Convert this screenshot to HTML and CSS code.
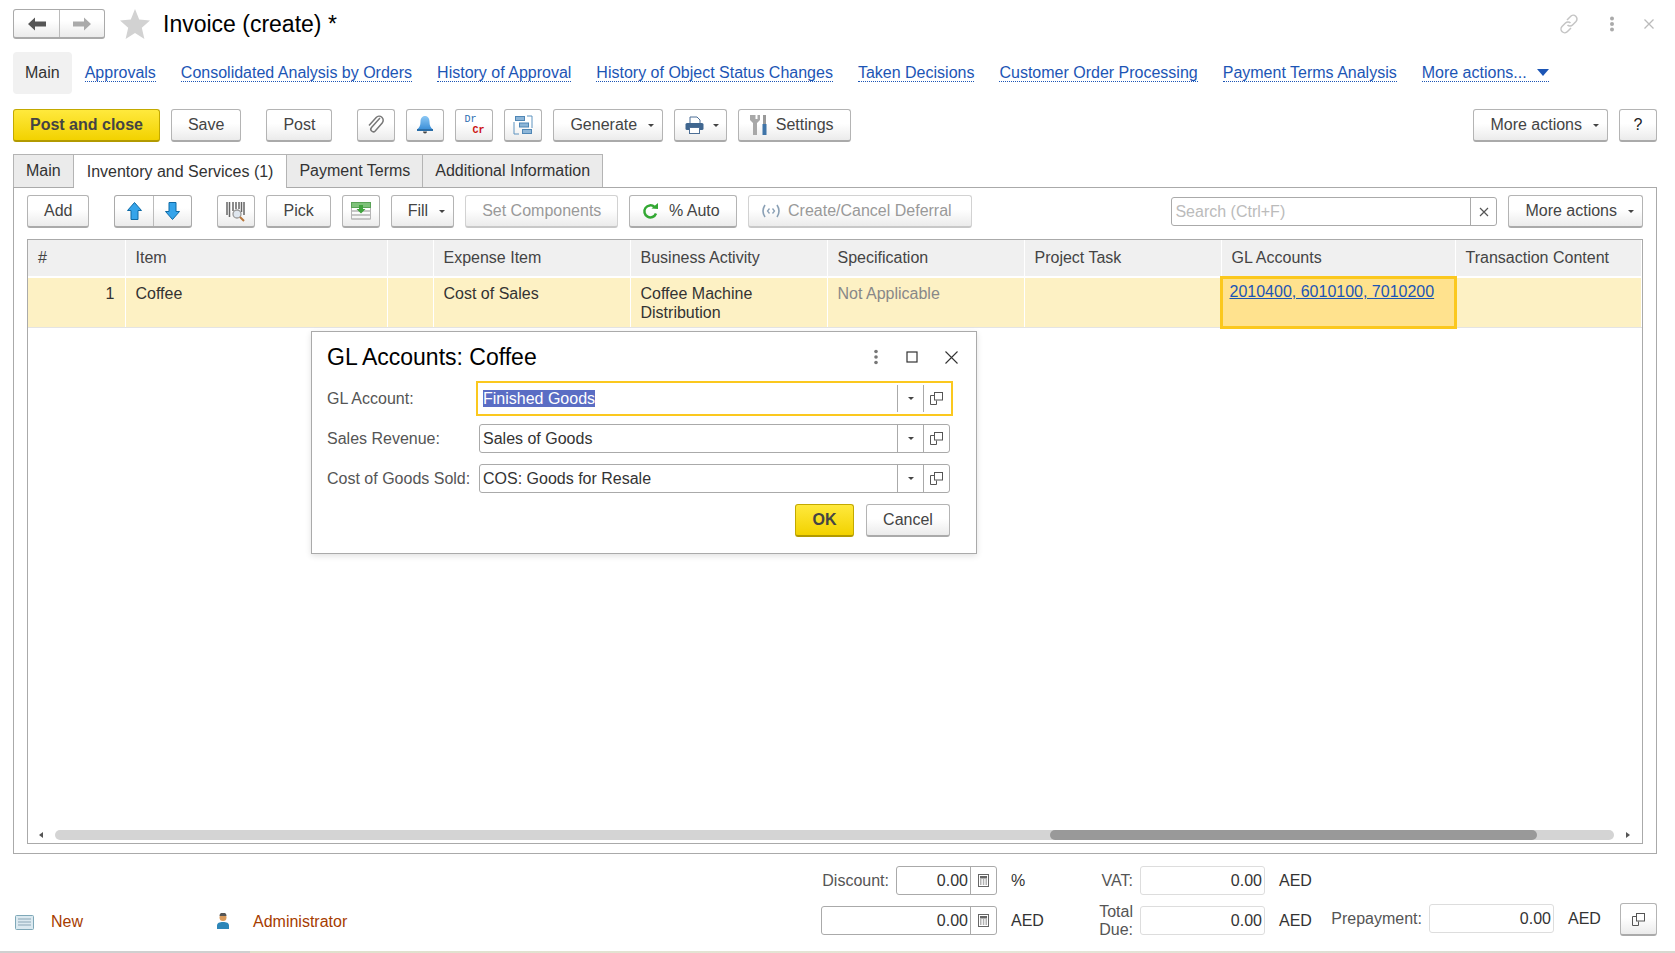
FILE: index.html
```html
<!DOCTYPE html>
<html>
<head>
    <meta charset="UTF-8">
    <title>Invoice (create)</title>
    <link rel="stylesheet" href="styles.css">
</head>
<body>
<div class="page">
    <div class="titlebar">
        <div class="btn-group hist">
            <span class="seg"><svg width="18" height="14" viewBox="0 0 18 14"><path d="M0 7l7-6.5v4h11v5H7v4z" fill="#555"/></svg></span>
            <span class="seg"><svg width="18" height="14" viewBox="0 0 18 14"><path d="M18 7l-7-6.5v4H0v5h11v4z" fill="#aaa"/></svg></span>
        </div>
        <svg class="star" width="30" height="30" viewBox="0 0 30 30"><path d="M15 0l4.2 10.6 10.8.9-8.2 7.2 2.6 11.3L15 24l-9.400 6 2.600-11.300L0 11.500l10.800-.9z" fill="#d2d2d2"/></svg>
        <h1 class="title">Invoice (create) *</h1>
        <div class="win-icons">
            <svg width="22" height="22" viewBox="0 0 22 22" fill="none" stroke="#c4c4c4" stroke-width="1.500"><path d="M9 7l3.500-3.500a3.500 3.500 0 0 1 5.500 5L14.500 12a3.500 3.500 0 0 1-5 0"/><path d="M13 15l-3.500 3.500a3.500 3.500 0 0 1-5.500-5L7.500 10a3.500 3.500 0 0 1 5 0"/></svg>
            <svg width="6" height="16" viewBox="0 0 6 16" fill="#aaa"><circle cx="3" cy="2.500" r="2"/><circle cx="3" cy="8" r="2"/><circle cx="3" cy="13.500" r="2"/></svg>
            <svg width="10" height="10" viewBox="0 0 10 10" stroke="#bbb" stroke-width="1.300"><path d="M.5.5l9 9M9.500.5l-9 9"/></svg>
        </div>
    </div>

    <div class="nav">
        <span class="nav-main">Main</span>
        <a class="nav-link">Approvals</a>
        <a class="nav-link">Consolidated Analysis by Orders</a>
        <a class="nav-link">History of Approval</a>
        <a class="nav-link">History of Object Status Changes</a>
        <a class="nav-link">Taken Decisions</a>
        <a class="nav-link">Customer Order Processing</a>
        <a class="nav-link">Payment Terms Analysis</a>
        <a class="nav-link">More actions...<i class="nav-arrow"></i></a>
    </div>

    <div class="toolbar">
        <button class="btn primary">Post and close</button>
        <button class="btn">Save</button>
        <button class="btn gap">Post</button>
        <button class="btn icon gap"><svg width="18" height="20" viewBox="0 0 18 20" fill="none" stroke="#777" stroke-width="1.500"><path d="M13 3L4.500 12.500a2.500 2.500 0 0 0 3.700 3.400l7-8a4 4 0 0 0-6-5.300L2 10.500"/></svg></button>
        <button class="btn icon"><svg width="18" height="20" viewBox="0 0 18 20"><defs><linearGradient id="bell" x1="0" y1="0" x2="0" y2="1"><stop offset="0" stop-color="#8cc8f5"/><stop offset="1" stop-color="#3b8fd8"/></linearGradient></defs><path d="M9 1c3 0 4.500 2.500 4.500 5.500 0 4 1 6 3.500 8H1c2.500-2 3.500-4 3.500-8C4.500 3.500 6 1 9 1z" fill="url(#bell)"/><rect x="1" y="14" width="16" height="2" fill="#2b6ea8"/><path d="M7 16.500h4a2 2 0 0 1-4 0z" fill="#444"/></svg></button>
        <button class="btn icon drcr"><span class="dr">Dr</span><span class="cr">Cr</span></button>
        <button class="btn icon"><svg width="20" height="20" viewBox="0 0 20 20"><path d="M1 7v12h5M19 13V1h-5" fill="none" stroke="#5f94c0"/><g fill="#8db6d8" stroke="#4f86b5"><rect x="2.500" y="1.500" width="9" height="4"/><rect x="6.500" y="8" width="9" height="4"/><rect x="9.500" y="14.500" width="9" height="4"/></g></svg></button>
        <button class="btn">Generate<i class="caret"></i></button>
        <button class="btn print"><svg width="19" height="18" viewBox="0 0 19 18"><path d="M5 1h7l3 3v4H5z" fill="#fff" stroke="#4d6f96"/><rect x="0.500" y="7" width="18" height="7" rx="1.500" fill="#3f668f"/><rect x="4.500" y="11.500" width="10" height="6" fill="#fff" stroke="#4d6f96"/></svg><i class="caret"></i></button>
        <button class="btn settings"><svg width="20" height="22" viewBox="0 0 20 22"><path d="M1 1v5l3 3v12h4V9l3-3V1L8.500 1v4h-2V1z" fill="#a8a8a8"/><rect x="14" y="1" width="3" height="9" fill="#999"/><rect x="13.500" y="10" width="4" height="11" fill="#3f74a8"/></svg>Settings</button>
        <button class="btn push">More actions<i class="caret"></i></button>
        <button class="btn help">?</button>
    </div>

    <div class="tabs">
        <span class="tab">Main</span>
        <span class="tab active">Inventory and Services (1)</span>
        <span class="tab">Payment Terms</span>
        <span class="tab">Additional Information</span>
    </div>

    <div class="panel">
        <div class="toolbar inner">
            <button class="btn add">Add</button>
            <div class="btn-group move gap">
                <span class="seg"><svg width="15" height="18" viewBox="0 0 15 18"><path d="M7.500.5l7 8H11v9H4v-9H.5z" fill="#35a4ea" stroke="#0f6aa5"/></svg></span>
                <span class="seg"><svg width="15" height="18" viewBox="0 0 15 18"><path d="M7.500 17.500l7-8H11v-9H4v9H.5z" fill="#35a4ea" stroke="#0f6aa5"/></svg></span>
            </div>
            <button class="btn icon gap"><svg width="20" height="21" viewBox="0 0 20 21"><path d="M1 1v13M3.500 1v15M7 1v9M10 1v7M13 1v7M15.500 1v10M18 1v13" stroke="#666" stroke-width="1.500"/><circle cx="11" cy="13" r="4" fill="#dfe6ee" stroke="#999" stroke-width="1.300"/><path d="M14 16l4 4" stroke="#b8763a" stroke-width="2"/></svg></button>
            <button class="btn">Pick</button>
            <button class="btn icon"><svg width="20" height="18" viewBox="0 0 20 18"><rect x="0.500" y="0.500" width="19" height="5" fill="#7ec27a" stroke="#5aa257"/><path d="M1 9h18M1 13h18M1 17h18" stroke="#b5b5b5" stroke-width="1.500"/><path d="M.5 6v11.500M19.500 6v11.500" stroke="#b5b5b5"/><path d="M8 3h4v4h2.500L10 11.500 5.500 7H8z" fill="#3fa33d"/></svg></button>
            <button class="btn">Fill<i class="caret"></i></button>
            <button class="btn off">Set Components</button>
            <button class="btn auto"><svg width="17" height="18" viewBox="0 0 17 18" fill="none"><path d="M14 11.500A6 6 0 1 1 12.500 5" stroke="#33a833" stroke-width="2.500"/><path d="M9.500 6.500L16 7V1z" fill="#33a833"/></svg>% Auto</button>
            <button class="btn off defer"><svg width="20" height="14" viewBox="0 0 20 14" fill="none" stroke="#8aa0b5" stroke-width="1.600"><path d="M4 1Q0 7 4 13M16 1q4 6 0 12"/><path d="M8.500 4.500L6.500 7l2 2.500M11.500 4.500l2 2.500-2 2.500" stroke-width="1.300"/></svg>Create/Cancel Deferral</button>
            <div class="search push">
                <span class="search-text">Search (Ctrl+F)</span>
                <span class="search-x"><svg width="10" height="10" viewBox="0 0 10 10" stroke="#555" stroke-width="1.200"><path d="M1 1l8 8M9 1l-8 8"/></svg></span>
            </div>
            <button class="btn">More actions<i class="caret"></i></button>
        </div>

        <div class="grid-wrap">
            <table class="grid">
                <colgroup>
                    <col class="c-num"><col class="c-item"><col class="c-pic">
                    <col class="c-mid"><col class="c-mid"><col class="c-mid"><col class="c-mid">
                    <col class="c-gl"><col>
                </colgroup>
                <thead>
                    <tr>
                        <th>#</th><th>Item</th><th></th><th>Expense Item</th><th>Business Activity</th>
                        <th>Specification</th><th>Project Task</th><th>GL Accounts</th><th>Transaction Content</th>
                    </tr>
                </thead>
                <tbody>
                    <tr>
                        <td class="num">1</td><td>Coffee</td><td class="pic"></td><td>Cost of Sales</td>
                        <td>Coffee Machine Distribution</td><td class="muted">Not Applicable</td><td></td>
                        <td class="current"><a>2010400, 6010100, 7010200</a></td><td></td>
                    </tr>
                </tbody>
            </table>
            <div class="hscroll">
                <i class="sarrow left"></i>
                <div class="track"><div class="thumb"></div></div>
                <i class="sarrow right"></i>
            </div>
        </div>
    </div>

    <div class="footer">
        <div class="status">
            <svg class="st-new" width="19" height="15" viewBox="0 0 19 15"><rect x="0.500" y="0.500" width="18" height="14" rx="1" fill="#dbe9f0" stroke="#7fa8b8"/><path d="M3 4h13M3 7h13M3 10h13" stroke="#8aa5b5"/></svg>
            <span class="st-text st-state">New</span>
            <svg class="st-user" width="12" height="16" viewBox="0 0 12 16"><circle cx="6" cy="4.500" r="3.500" fill="#d99a5b"/><path d="M2.500 3a3.500 3.500 0 0 1 7 0z" fill="#555"/><path d="M0 16v-3.500C0 10 2.500 9 6 9s6 1 6 3.500V16z" fill="#2d86b8"/></svg>
            <span class="st-text">Administrator</span>
        </div>
        <div class="totals">
            <span class="lbl first">Discount:</span>
            <div class="box dark calc-box"><span class="val">0.00</span><span class="calc"><svg width="11" height="13" viewBox="0 0 11 13"><rect x="0.500" y="0.500" width="10" height="12" fill="none" stroke="#666"/><rect x="2" y="2" width="7" height="2.500" fill="#666"/><path d="M2 6h1.500M4.800 6h1.500M7.500 6H9M2 8h1.500M4.800 8h1.500M7.500 8H9M2 10h1.500M4.800 10h1.500M7.500 10H9" stroke="#666"/></svg></span></div>
            <span class="unit">%</span>
            <span class="lbl">VAT:</span>
            <div class="box"><span class="val">0.00</span></div>
            <span class="unit">AED</span>
            <span class="blank"></span>

            <div class="box dark calc-box wide"><span class="val">0.00</span><span class="calc"><svg width="11" height="13" viewBox="0 0 11 13"><rect x="0.500" y="0.500" width="10" height="12" fill="none" stroke="#666"/><rect x="2" y="2" width="7" height="2.500" fill="#666"/><path d="M2 6h1.500M4.800 6h1.500M7.500 6H9M2 8h1.500M4.800 8h1.500M7.500 8H9M2 10h1.500M4.800 10h1.500M7.500 10H9" stroke="#666"/></svg></span></div>
            <span class="unit">AED</span>
            <span class="lbl">Total Due:</span>
            <div class="box"><span class="val">0.00</span></div>
            <span class="unit">AED</span>
            <span class="lbl up">Prepayment:</span>
            <div class="box up"><span class="val">0.00</span></div>
            <span class="unit up">AED</span>
            <button class="btn copy-btn"><svg class="copy" width="13" height="13" viewBox="0 0 13 13" fill="none" stroke="#555"><path d="M4.500 3.500H.5v9h6v-4"/><rect x="4.500" y="0.500" width="8" height="7.500" fill="#fff"/></svg></button>
        </div>
    </div>
    <div class="strip"></div>

    <div class="dialog">
        <div class="dlg-head">
            <h2 class="dlg-title">GL Accounts: Coffee</h2>
            <div class="dlg-icons">
                <svg width="6" height="16" viewBox="0 0 6 16" fill="#777"><circle cx="3" cy="2.500" r="1.800"/><circle cx="3" cy="8" r="1.800"/><circle cx="3" cy="13.500" r="1.800"/></svg>
                <svg width="12" height="12" viewBox="0 0 12 12" fill="none" stroke="#333" stroke-width="1.200"><rect x="1" y="1" width="10" height="10"/></svg>
                <svg width="13" height="13" viewBox="0 0 13 13" stroke="#333" stroke-width="1.100"><path d="M.5.5l12 12M12.500.5l-12 12"/></svg>
            </div>
        </div>
        <div class="dlg-row">
            <label class="dlg-label">GL Account:</label>
            <div class="field focus"><span class="f-text"><span class="sel">Finished Goods</span></span><span class="f-btn"><i class="caret"></i></span><span class="f-btn"><svg width="13" height="13" viewBox="0 0 13 13" fill="none" stroke="#555"><path d="M4.500 3.500H.5v9h6v-4"/><rect x="4.500" y="0.500" width="8" height="7.500" fill="#fff"/></svg></span></div>
        </div>
        <div class="dlg-row">
            <label class="dlg-label">Sales Revenue:</label>
            <div class="field"><span class="f-text">Sales of Goods</span><span class="f-btn"><i class="caret"></i></span><span class="f-btn"><svg width="13" height="13" viewBox="0 0 13 13" fill="none" stroke="#555"><path d="M4.500 3.500H.5v9h6v-4"/><rect x="4.500" y="0.500" width="8" height="7.500" fill="#fff"/></svg></span></div>
        </div>
        <div class="dlg-row">
            <label class="dlg-label">Cost of Goods Sold:</label>
            <div class="field"><span class="f-text">COS: Goods for Resale</span><span class="f-btn"><i class="caret"></i></span><span class="f-btn"><svg width="13" height="13" viewBox="0 0 13 13" fill="none" stroke="#555"><path d="M4.500 3.500H.5v9h6v-4"/><rect x="4.500" y="0.500" width="8" height="7.500" fill="#fff"/></svg></span></div>
        </div>
        <div class="dlg-actions">
            <button class="btn primary ok">OK</button>
            <button class="btn cancel">Cancel</button>
        </div>
    </div>
</div>
</body>
</html>
```

FILE: styles.css
```css
* {
    box-sizing: border-box;
}

body {
    margin: 0;
    font-family: "Liberation Sans", Arial, sans-serif;
    font-size: 16px;
    color: #333;
    background: #fff;
}

.page {
    position: relative;
    width: 1675px;
    height: 953px;
    overflow: hidden;
    display: flex;
    flex-direction: column;
}

/* title */
.titlebar {
    display: flex;
    align-items: center;
    height: 30px;
    margin: 9px 18px 0 13px;
}

.btn-group {
    display: flex;
    height: 30px;
    border: 1px solid #aaa;
    border-bottom-width: 2px;
    border-radius: 3px;
    background: linear-gradient(#fff 40%, #ebebeb);
}

.seg {
    display: flex;
    align-items: center;
    justify-content: center;
}

.seg + .seg {
    border-left: 1px solid #bbb;
}

.hist .seg {
    width: 45px;
}

.star {
    margin: 0 0 0 15px;
}

.title {
    margin: 0 0 0 13px;
    font-size: 23px;
    font-weight: normal;
    color: #000;
}

.win-icons {
    margin-left: auto;
    display: flex;
    align-items: center;
    gap: 29px;
    padding-right: 3px;
}

/* form commands */
.nav {
    display: flex;
    align-items: center;
    height: 42px;
    margin: 13px 0 0 13px;
    gap: 25px;
}

.nav-main {
    display: flex;
    align-items: center;
    height: 42px;
    padding: 0 12px;
    margin-right: -12px;
    background: #f1f1f1;
    border-radius: 4px;
}

.nav-link {
    color: #1c55b5;
    border-bottom: 1px dotted #1c55b5;
    line-height: 17px;
}

.nav-arrow {
    display: inline-block;
    width: 0;
    height: 0;
    margin-left: 10px;
    vertical-align: 2px;
    border: 6px solid transparent;
    border-top: 7px solid #1c55b5;
    border-bottom: 0;
}

.toolbar {
    display: flex;
    align-items: flex-start;
    gap: 11px;
    margin: 15px 18px 0 13px;
}

.btn {
    display: inline-flex;
    align-items: center;
    justify-content: center;
    flex: none;
    height: 33px;
    padding: 0 16px;
    font: inherit;
    color: #444;
    background: linear-gradient(#fff 45%, #ebebeb);
    border: 1px solid #b4b4b4;
    border-bottom: 2px solid #aaa;
    border-radius: 3px;
}

.btn.primary {
    font-weight: bold;
    color: #444;
    background: linear-gradient(#ffe93d, #f2d200);
    border-color: #c3a900;
    border-bottom-color: #b29a00;
}

.btn.gap,
.btn-group.gap {
    margin-left: 14px;
}

.btn.icon {
    width: 38px;
    padding: 0;
}

.btn.off {
    color: #999;
    border-color: #d2d2d2;
    border-bottom-color: #c8c8c8;
}

.btn.push,
.search.push {
    margin-left: auto;
}

.caret {
    display: inline-block;
    width: 0;
    height: 0;
    margin-left: 11px;
    margin-right: -8px;
    border: 3px solid transparent;
    border-top: 3px solid #444;
    border-bottom: 0;
}

.drcr {
    flex-direction: column;
    font-family: "Liberation Mono", monospace;
    font-size: 10px;
    font-weight: bold;
    line-height: 11px;
}

.dr {
    color: #2a6db0;
    margin-right: 8px;
    font-weight: normal;
}

.cr {
    color: #cc1111;
    margin-left: 8px;
}

.print {
    width: 53px;
    padding: 0 0 0 2px;
}

.print .caret {
    margin-left: 9px;
    margin-right: 0;
}

.settings {
    padding: 0 16px 0 9px;
    width: 113px;
}

.settings svg {
    margin-right: 7px;
}

.help {
    width: 38px;
    padding: 0;
    color: #222;
}

/* tabs */
.tabs {
    display: flex;
    height: 33px;
    margin: 12px 0 0 13px;
}

.tab {
    display: flex;
    align-items: center;
    padding: 0 12px;
    background: #ebebeb;
    border: 1px solid #b4b4b4;
    border-left: 0;
    border-bottom: 0;
}

.tab:first-child {
    border-left: 1px solid #b4b4b4;
}

.tab.active {
    position: relative;
    z-index: 1;
    height: 34px;
    padding: 0 13px;
    background: #fff;
}

.panel {
    display: flex;
    flex-direction: column;
    height: 667px;
    margin: 0 18px 0 13px;
    border: 1px solid #aaa;
}

.toolbar.inner {
    margin: 7px 13px 0;
}

.btn-group.move {
    height: 33px;
}

.move .seg {
    width: 38px;
}

.auto {
    width: 108px;
    padding: 0 16px 0 11px;
}

.auto svg {
    margin-right: 10px;
}

.defer {
    width: 224px;
    padding: 0 16px 0 8px;
}

.defer svg {
    margin-right: 7px;
}

.search {
    display: flex;
    width: 326px;
    height: 29px;
    margin-top: 2px;
    background: #fff;
    border: 1px solid #aaa;
    border-radius: 3px;
}

.search-text {
    flex: 1;
    padding-left: 3px;
    line-height: 27px;
    color: #bbb;
}

.search-x {
    display: flex;
    align-items: center;
    justify-content: center;
    width: 26px;
    border-left: 1px solid #aaa;
}

/* grid */
.grid-wrap {
    display: flex;
    flex-direction: column;
    flex: 1;
    margin: 11px 13px 9px;
    border: 1px solid #aaa;
    padding-bottom: 3px;
}

.grid {
    width: 100%;
    table-layout: fixed;
    border-collapse: collapse;
    margin-bottom: auto;
}

.c-num { width: 97px; }
.c-item { width: 262px; }
.c-pic { width: 46px; }
.c-mid { width: 197px; }
.c-gl { width: 234px; }

.grid th {
    height: 37px;
    padding: 0 10px;
    font-weight: normal;
    text-align: left;
    color: #444;
    background: #f0f0f0;
    border-right: 1px solid #fff;
    border-bottom: 2px solid #fff;
}

.grid td {
    height: 50px;
    padding: 6px 10px 0;
    line-height: 19px;
    vertical-align: top;
    background: #fdf1c4;
    border-right: 1px solid #fff;
    border-bottom: 1px solid #e4e4e4;
}

.grid td.num {
    text-align: right;
}

.grid td.pic {
    border-left: 1px solid #c8c8c8;
}

.grid td.muted {
    color: #888;
}

.grid td.current {
    padding: 3px 7px 0;
    background: #ffe28e;
    border: 3px solid #fbc81e;
}

.current a {
    color: #1c55b5;
    text-decoration: underline;
}

.hscroll {
    display: flex;
    align-items: center;
    height: 10px;
    padding: 0 12px 0 11px;
}

.sarrow {
    width: 0;
    height: 0;
    border: 3px solid transparent;
}

.sarrow.left {
    border-right: 4px solid #555;
    border-left: 0;
}

.sarrow.right {
    border-left: 4px solid #555;
    border-right: 0;
}

.track {
    flex: 1;
    height: 10px;
    margin: 0 12px;
    background: #d4d4d4;
    border-radius: 5px;
}

.thumb {
    width: 487px;
    height: 10px;
    margin-left: 995px;
    background: #999;
    border-radius: 5px;
}

/* footer */
.footer {
    display: flex;
    height: 97px;
    padding: 12px 18px 0 13px;
}

.status {
    display: flex;
    align-items: center;
    align-self: flex-end;
    width: 808px;
    height: 20px;
    margin-bottom: 19px;
    padding-left: 2px;
}

.st-text {
    color: #a63c00;
}

.st-new {
    margin-right: 17px;
}

.st-state {
    width: 166px;
}

.st-user {
    margin-right: 24px;
    margin-bottom: 3px;
}

.totals {
    display: grid;
    grid-template-columns: 75px 101px 65px 78px 125px 65px 99px 125px 66px 37px;
    grid-auto-rows: 29px;
    row-gap: 11px;
    align-items: center;
    width: 836px;
}

.lbl {
    text-align: right;
    padding-right: 7px;
    color: #555;
}

.lbl.first {
    padding-right: 7px;
}

.unit {
    padding-left: 14px;
}

.blank {
    grid-column: span 3;
}

.box {
    display: flex;
    height: 29px;
    background: #fff;
    border: 1px solid #ddd;
    border-radius: 3px;
}

.box.dark {
    border-color: #aaa;
}

.box.wide {
    grid-column: span 2;
}

.val {
    flex: 1;
    padding-right: 2px;
    line-height: 27px;
    text-align: right;
}

.calc {
    display: flex;
    align-items: center;
    justify-content: center;
    width: 26px;
    border-left: 1px solid #aaa;
}

.up {
    margin-top: -4px;
}

.copy-btn {
    width: 37px;
    padding: 0;
    margin-top: -2px;
}

.strip {
    height: 2px;
    background: linear-gradient(90deg, #d0d0d0 250px, #dfe0cc 250px, #e6e6d8 60%, #d8d8d0);
}

/* dialog over the form */
.dialog {
    position: absolute;
    left: 311px;
    top: 331px;
    width: 666px;
    height: 223px;
    padding: 0 26px 0 15px;
    background: #fff;
    border: 1px solid #aaa;
    box-shadow: 0 2px 6px rgba(0, 0, 0, 0.12);
}

.dlg-head {
    display: flex;
    align-items: center;
    height: 50px;
    margin-right: -26px;
}

.dlg-title {
    margin: 0;
    font-size: 23px;
    font-weight: normal;
    color: #000;
}

.dlg-icons {
    display: flex;
    align-items: center;
    gap: 27px;
    margin-left: auto;
    padding-right: 18px;
}

.dlg-row {
    display: flex;
    align-items: center;
    height: 29px;
    margin-top: 11px;
}

.dlg-row:nth-child(2) {
    margin-top: 2px;
}

.dlg-label {
    width: 152px;
    color: #555;
}

.field {
    display: flex;
    flex: 1;
    height: 29px;
    border: 1px solid #aaa;
    border-radius: 3px;
}

.field.focus {
    border-color: #fff;
    border-radius: 0;
    outline: 2px solid #fbc81e;
    outline-offset: 1px;
}

.f-text {
    flex: 1;
    padding-left: 3px;
    line-height: 27px;
}

.sel {
    color: #fff;
    background: #5a6dc4;
}

.f-btn {
    display: flex;
    align-items: center;
    justify-content: center;
    width: 26px;
    border-left: 1px solid #aaa;
}

.f-btn .caret {
    margin: 0;
}

.dlg-actions {
    display: flex;
    justify-content: flex-end;
    gap: 12px;
    margin-top: 11px;
}

.ok {
    width: 59px;
    padding: 0;
}

.cancel {
    width: 84px;
    padding: 0;
}
```
